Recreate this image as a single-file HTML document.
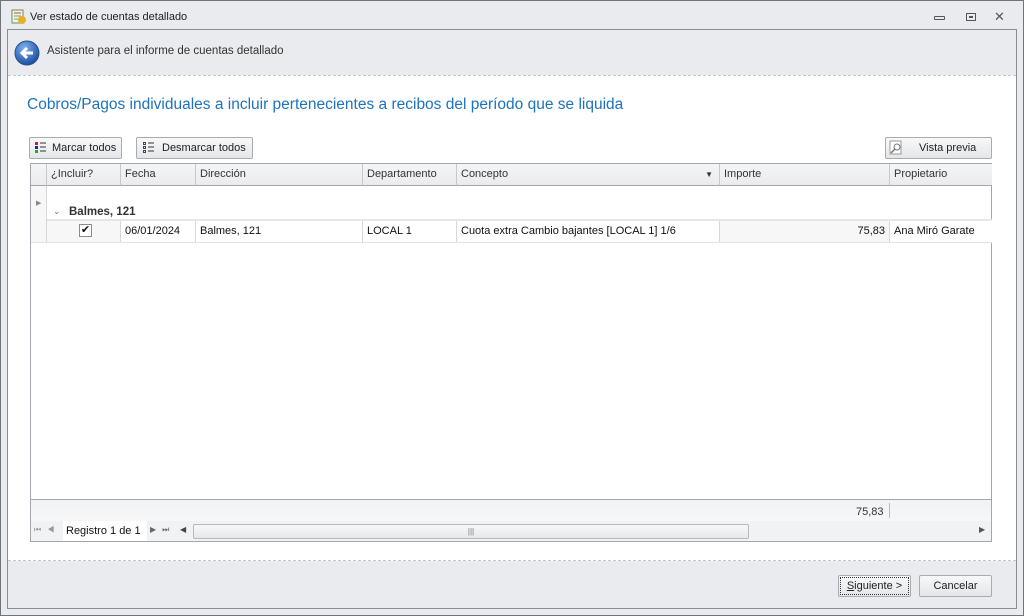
<!DOCTYPE html>
<html><head><meta charset="utf-8"><style>
*{box-sizing:border-box;margin:0;padding:0;white-space:nowrap}
body{width:1024px;height:616px;background:#e9ebee;font-family:"Liberation Sans",sans-serif;font-size:11px;color:#222;position:relative;overflow:hidden}
.abs{position:absolute}
.win{left:0;top:0;width:1024px;height:616px;border:1px solid #70757b;background:#e9ebee}
.inner{left:7px;top:29px;width:1010px;height:580px;border:1px solid #8a8e94;background:#e9ebee}
.btn{position:absolute;border:1px solid #a9adb3;border-radius:2px;background:linear-gradient(#f7f8f9,#e4e6e9);font-size:11px;color:#222;line-height:20px}
.grid{left:30px;top:163px;width:962px;height:379px;border:1px solid #a3a7ad;background:#fff}
.hd{position:absolute;top:0;height:22px;border-right:1px solid #c5c8cc;border-bottom:1px solid #a3a7ad;background:linear-gradient(#f4f5f6,#e9ebed);line-height:21px;padding-left:4px;font-size:11px;color:#333}
.cell{position:absolute;top:57px;height:21px;border-right:1px solid #d6d8db;line-height:21px;padding-left:4px;font-size:11px;color:#111;background:#f7f7f7}
</style></head><body>
<div class="abs win"></div>
<svg class="abs" style="left:11px;top:9px" width="16" height="16"><rect x="1" y="1" width="11" height="13" fill="#f2f4e8" stroke="#6c8a5a"/><line x1="3" y1="4" x2="10" y2="4" stroke="#c44"/><line x1="3" y1="7" x2="10" y2="7" stroke="#6a6"/><line x1="3" y1="10" x2="9" y2="10" stroke="#6a6"/><circle cx="11" cy="11" r="4" fill="#e8b028"/></svg>
<div class="abs" style="left:30px;top:11px;font-size:11px;color:#222">Ver estado de cuentas detallado</div>
<div class="abs" style="left:934px;top:16px;width:11px;height:4px;border:1px solid #555;border-radius:1px"></div>
<div class="abs" style="left:966px;top:13px;width:10px;height:8px;border:1px solid #555"><div style="margin:2px;height:2px;border:1px solid #555"></div></div>
<div class="abs" style="left:994px;top:9px;font-size:13px;color:#555">✕</div>
<div class="abs inner"></div>
<div class="abs" style="left:8px;top:75px;width:1008px;height:486px;background:#fff;border-top:1px dashed #c4c7cc;border-bottom:1px dashed #c4c7cc"></div>
<svg class="abs" style="left:14px;top:40px" width="26" height="26"><defs><radialGradient id="g" cx=".4" cy=".3" r=".8"><stop offset="0" stop-color="#7fb3ef"/><stop offset="1" stop-color="#0d3f95"/></radialGradient></defs><circle cx="13" cy="13" r="12" fill="url(#g)" stroke="#2a4f8a"/><path d="M19 13H9M13 8l-5 5 5 5" stroke="#fff" stroke-width="3" fill="none"/></svg>
<div class="abs" style="left:47px;top:45px;font-size:11.5px;color:#333">Asistente para el informe de cuentas detallado</div>
<div class="abs" style="left:27px;top:96px;font-size:15.5px;color:#1e73be">Cobros/Pagos individuales a incluir pertenecientes a recibos del período que se liquida</div>
<div class="btn" style="left:29px;top:137px;width:93px;height:22px;padding-left:22px">Marcar todos</div>
<svg class="abs" style="left:35px;top:141px" width="12" height="13"><rect x="0" y="1" width="3" height="3" fill="#c22"/><rect x="0" y="5" width="3" height="3" fill="#22a"/><rect x="0" y="9" width="3" height="3" fill="#2a2"/><path d="M5 2h6M5 6h6M5 10h6" stroke="#333"/></svg>
<div class="btn" style="left:136px;top:137px;width:117px;height:22px;padding-left:25px">Desmarcar todos</div>
<svg class="abs" style="left:143px;top:141px" width="12" height="13"><rect x=".5" y="1.5" width="2" height="2" fill="none" stroke="#444"/><rect x=".5" y="5.5" width="2" height="2" fill="none" stroke="#444"/><rect x=".5" y="9.5" width="2" height="2" fill="none" stroke="#444"/><path d="M5 2h6M5 6h6M5 10h6" stroke="#333"/></svg>
<div class="btn" style="left:885px;top:137px;width:107px;height:22px;padding-left:33px">Vista previa</div>
<svg class="abs" style="left:889px;top:140px" width="14" height="16"><rect x="1" y="1" width="11" height="13" fill="#fff" stroke="#999"/><circle cx="8" cy="7" r="3" fill="none" stroke="#777"/><path d="M6 9l-4 4" stroke="#777" stroke-width="1.5"/></svg>
<div class="abs grid">
<div class="hd" style="left:0;width:16px;padding:0"></div>
<div class="hd" style="left:16px;width:74px">¿Incluir?</div>
<div class="hd" style="left:90px;width:75px">Fecha</div>
<div class="hd" style="left:165px;width:167px">Dirección</div>
<div class="hd" style="left:332px;width:94px">Departamento</div>
<div class="hd" style="left:426px;width:263px">Concepto<span style="position:absolute;right:6px;font-size:8px">▼</span></div>
<div class="hd" style="left:689px;width:170px">Importe</div>
<div class="hd" style="left:859px;width:102px;border-right:0">Propietario</div>
<div class="abs" style="left:0;top:22px;width:16px;height:56px;border-right:1px solid #d6d8db;background:#f7f7f7"></div>
<div class="abs" style="left:5px;top:35px;font-size:7px;color:#888">▶</div>
<div class="abs" style="left:16px;top:22px;width:945px;height:35px;border-bottom:2px solid #e4e6e8"></div>
<div class="abs" style="left:22px;top:42px;font-size:9px;color:#777">⌄</div>
<div class="abs" style="left:38px;top:42px;font-weight:bold;font-size:11.5px;color:#333">Balmes, 121</div>
<div class="cell" style="left:16px;width:74px"><div style="position:absolute;left:32px;top:3px;width:13px;height:13px;border:1px solid #8c8c8c;background:#fff;font-size:11px;line-height:11px;text-align:center">✔</div></div>
<div class="cell" style="left:90px;width:75px;background:#fff">06/01/2024</div>
<div class="cell" style="left:165px;width:167px;background:#fff">Balmes, 121</div>
<div class="cell" style="left:332px;width:94px;background:#fff">LOCAL 1</div>
<div class="cell" style="left:426px;width:263px;background:#fff">Cuota extra Cambio bajantes [LOCAL 1] 1/6</div>
<div class="cell" style="left:689px;width:170px;text-align:right;padding-right:4px">75,83</div>
<div class="cell" style="left:859px;width:102px;border-right:0;background:#fff">Ana Miró Garate</div>
<div class="abs" style="left:0;top:78px;width:961px;border-top:1px solid #e0e2e4"></div>
<div class="abs" style="left:0;top:335px;width:960px;height:22px;border-top:1px solid #a3a7ad;background:linear-gradient(#f1f2f4,#f6f7f8)"></div>
<div class="abs" style="left:825px;top:342px;color:#333">75,83</div>
<div class="abs" style="left:858px;top:339px;height:15px;border-left:1px solid #bbb"></div>
<div class="abs" style="left:0;top:357px;width:960px;height:20px;background:#f1f2f4"></div>
<div class="abs" style="left:3px;top:361px;font-size:8px;color:#999;letter-spacing:6px">⏮◀</div>
<div class="abs" style="left:32px;top:357px;width:84px;height:20px;background:#fff;line-height:21px;padding-left:3px;color:#111">Registro 1 de 1</div>
<div class="abs" style="left:119px;top:361px;font-size:8px;color:#666;letter-spacing:6px">▶⏭</div>
<div class="abs" style="left:149px;top:361px;font-size:8px;color:#444">◀</div>
<div class="abs" style="left:162px;top:360px;width:556px;height:15px;border:1px solid #b6b9bd;border-radius:2px;background:linear-gradient(#f8f8f9,#e6e8ea);text-align:center;font-size:8px;line-height:13px;color:#777">|||</div>
<div class="abs" style="left:948px;top:361px;font-size:8px;color:#555">▶</div>
</div>
<div class="btn" style="left:838px;top:575px;width:73px;height:22px;text-align:center;outline:1px dotted #333;outline-offset:-3px"><u>S</u>iguiente &gt;</div>
<div class="btn" style="left:919px;top:575px;width:73px;height:22px;text-align:center">Cancelar</div>
</body></html>
